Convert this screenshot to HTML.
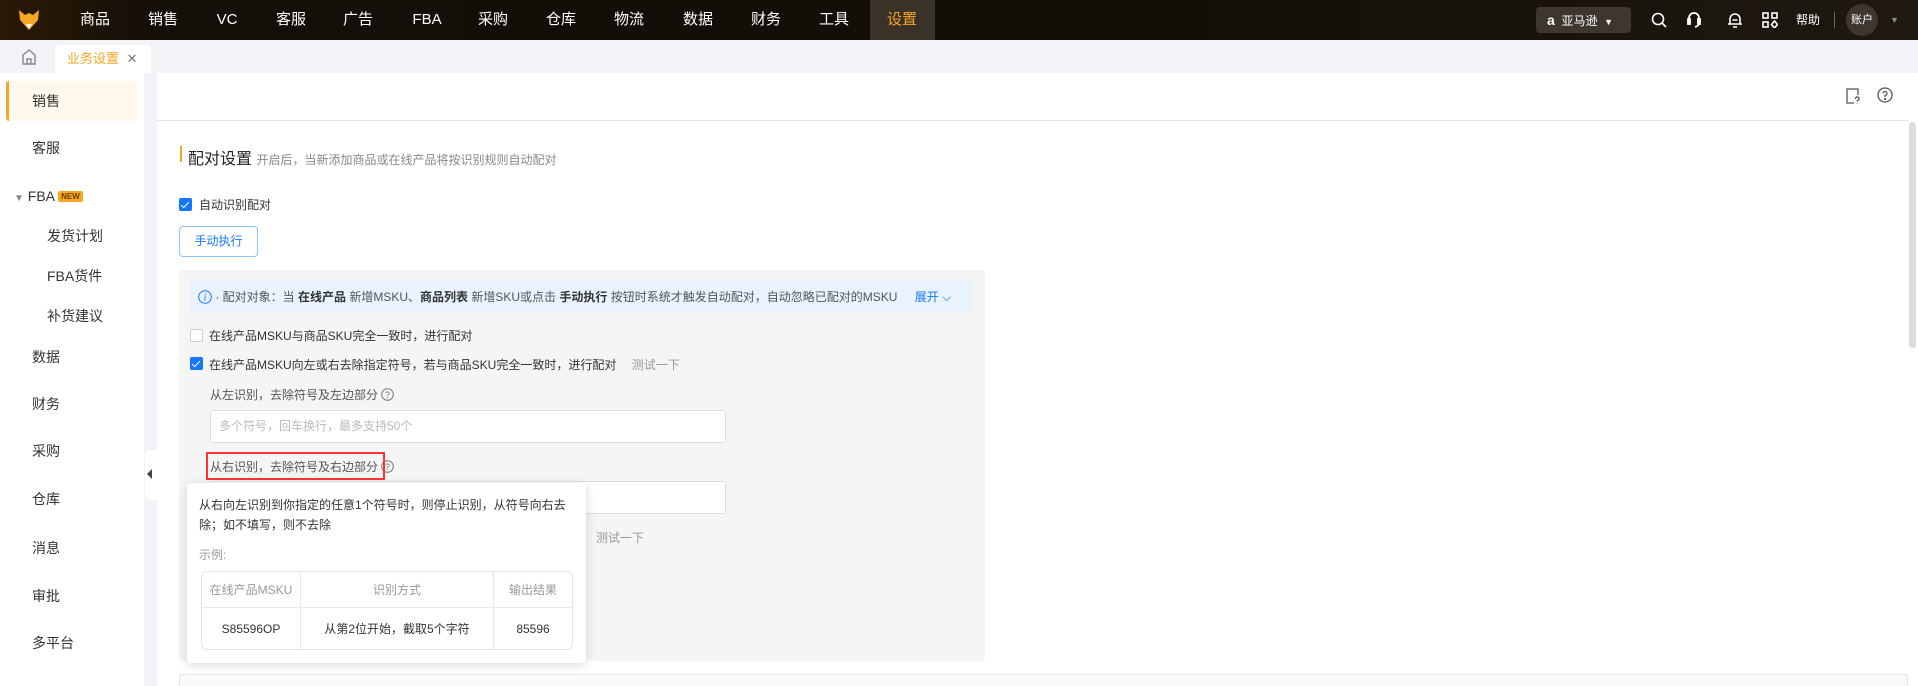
<!DOCTYPE html>
<html><head><meta charset="utf-8">
<style>
*{box-sizing:border-box;margin:0;padding:0}
body{width:1918px;height:686px;overflow:hidden;font-family:"Liberation Sans","Noto Sans CJK SC",sans-serif;background:#fff;position:relative;color:#333}
.a{position:absolute}
#nav{left:0;top:0;width:1918px;height:40px;background:linear-gradient(90deg,#2a1a06 0%,#140f08 8%,#120e08 60%,#1e1910 100%)}
.ni{position:absolute;top:0;height:40px;line-height:40px;color:#fff;font-size:15px;transform:translateX(-50%)}
#tabs{left:0;top:40px;width:1918px;height:33px;background:#f2f3f6}
.side{left:0;top:73px;width:144px;height:613px;background:#fff}
.si{position:absolute;left:32px;font-size:14px;color:#333;transform:translateY(-50%)}
.sub{left:47px}
.gap{left:144px;top:73px;width:13px;height:613px;background:#f2f3f6}
.cb{position:absolute;width:13px;height:13px;border-radius:2px}
.on{background:#1677ff}
.on:after{content:"";position:absolute;left:4px;top:1.5px;width:3px;height:7px;border:solid #fff;border-width:0 1.5px 1.5px 0;transform:rotate(45deg)}
.off{border:1px solid #ccc;background:#fff}
.inp{position:absolute;background:#fff;border:1px solid #ddd;border-radius:3px}
td{border-right:1px solid #e8e8e8;text-align:center;font-size:12px}
.q{display:inline-block;vertical-align:-2px}
</style></head><body>
<div id="nav" class="a">
 <svg class="a" style="left:18px;top:9px" width="22" height="22" viewBox="0 0 22 22"><path d="M1 1 L7 6 L11 4 L15 6 L21 1 L20 11 L11 21 L2 11 Z" fill="#f5a623"/><path d="M8 15 L14 15 L11 20Z" fill="#fff"/></svg>
 <div class="ni" style="left:95px">商品</div><div class="ni" style="left:163px">销售</div><div class="ni" style="left:227px">VC</div><div class="ni" style="left:291px">客服</div><div class="ni" style="left:358px">广告</div><div class="ni" style="left:427px">FBA</div><div class="ni" style="left:493px">采购</div><div class="ni" style="left:561px">仓库</div><div class="ni" style="left:629px">物流</div><div class="ni" style="left:698px">数据</div><div class="ni" style="left:766px">财务</div><div class="ni" style="left:834px">工具</div>
 <div class="a" style="left:870px;top:0;width:65px;height:40px;background:#3a3226"></div>
 <div class="ni" style="left:902px;color:#f5a623">设置</div>
 <div class="a" style="left:1536px;top:7px;width:95px;height:26px;background:#3d3730;border-radius:4px;color:#fff;font-size:12px;line-height:26px;padding-left:11px"><b style="font-size:14px">a</b>&nbsp; 亚马逊 &nbsp;<span style="font-size:9px">▼</span></div>
 <svg class="a" style="left:1651px;top:12px" width="16" height="16" viewBox="0 0 16 16" fill="none" stroke="#fff" stroke-width="1.6"><circle cx="7" cy="7" r="5.5"/><path d="M11 11 L15 15"/></svg>
 <svg class="a" style="left:1686px;top:11px" width="16" height="18" viewBox="0 0 16 18" fill="none" stroke="#fff" stroke-width="1.8"><path d="M3 10 V7 A5 5 0 0 1 13 7 V12 Q13 15 9 16"/><rect x="2" y="8" width="2" height="5" fill="#fff"/><rect x="12" y="8" width="2" height="5" fill="#fff"/></svg>
 <svg class="a" style="left:1727px;top:11px" width="16" height="18" viewBox="0 0 16 18" fill="none" stroke="#fff" stroke-width="1.6"><path d="M3 13 V8 A5 5 0 0 1 13 8 V13 Z M1 13 H15 M6 16 H10 M5.5 9 H10.5"/></svg>
 <svg class="a" style="left:1762px;top:12px" width="16" height="16" viewBox="0 0 16 16" fill="none" stroke="#fff" stroke-width="1.6"><rect x="1" y="1" width="5" height="5"/><rect x="10" y="1" width="5" height="5"/><rect x="1" y="10" width="5" height="5"/><path d="M12.5 9 L15.5 12.5 L12.5 16 L9.5 12.5Z"/></svg>
 <div class="a" style="left:1796px;top:0;line-height:40px;color:#fff;font-size:12px">帮助</div>
 <div class="a" style="left:1834px;top:12px;width:1px;height:16px;background:#666"></div>
 <div class="a" style="left:1846px;top:4px;width:32px;height:32px;border-radius:50%;background:#3d3730;color:#fff;font-size:11px;line-height:32px;text-align:center">账户</div>
 <div class="a" style="left:1890px;top:0;line-height:40px;color:#888;font-size:9px">▼</div>
</div>
<div id="tabs" class="a">
 <svg class="a" style="left:22px;top:9px" width="14" height="16" viewBox="0 0 14 16" fill="none" stroke="#888" stroke-width="1.4"><path d="M1 6 L7 1 L13 6 V15 H1 Z M5 15 V10 H9 V15"/></svg>
 <div class="a" style="left:55px;top:5px;width:96px;height:28px;background:#fff;border-radius:3px 3px 0 0;font-size:13px;color:#f5a623;line-height:28px;padding-left:12px">业务设置 <span style="color:#777;margin-left:4px">✕</span></div>
</div>
<div class="a side">
 <div class="a" style="left:6px;top:8px;width:131px;height:40px;background:#fff8ec;border-radius:3px;border-left:3px solid #f5a623"></div>
 <div class="si" style="top:28px">销售</div>
 <div class="si" style="top:75px">客服</div>
 <div class="si" style="top:123px;left:14px"><span style="color:#888;font-size:10px">▼</span> FBA <span style="background:#f5a623;color:#6b3f00;font-size:8px;font-weight:bold;padding:1px 3px;border-radius:2px;vertical-align:2px">NEW</span></div>
 <div class="si sub" style="top:163px">发货计划</div>
 <div class="si sub" style="top:203px">FBA货件</div>
 <div class="si sub" style="top:243px">补货建议</div>
 <div class="si" style="top:284px">数据</div>
 <div class="si" style="top:331px">财务</div>
 <div class="si" style="top:378px">采购</div>
 <div class="si" style="top:426px">仓库</div>
 <div class="si" style="top:475px">消息</div>
 <div class="si" style="top:523px">审批</div>
 <div class="si" style="top:570px">多平台</div>
</div>
<div class="a gap"></div>
<div class="a" style="left:145px;top:450px;width:12px;height:50px;background:#fff;border-radius:6px 0 0 6px"><div style="position:absolute;left:2px;top:19px;width:0;height:0;border:5px solid transparent;border-right:5px solid #444;border-left:0"></div></div>
<div class="a" style="left:157px;top:120px;width:1751px;height:1px;background:#e4e4e4"></div>
<svg class="a" style="left:1846px;top:88px" width="14" height="16" viewBox="0 0 14 16" fill="none" stroke="#555" stroke-width="1.3"><path d="M8 15 H1 V1 H12 V7"/><path d="M9.5 11 A1.8 1.8 0 1 1 11.3 12.5 V13.5 M11.3 15 V15.5"/></svg>
<svg class="a" style="left:1877px;top:87px" width="16" height="16" viewBox="0 0 16 16" fill="none" stroke="#555" stroke-width="1.3"><circle cx="8" cy="8" r="7"/><path d="M6 6.3 A2 2 0 1 1 8 8.5 V10"/><circle cx="8" cy="12" r=".5" fill="#555"/></svg>
<div class="a" style="left:1909px;top:122px;width:7px;height:226px;background:#dcdcdc;border-radius:4px"></div>
<div class="a" style="left:180px;top:146px;width:2px;height:16px;background:#f5a623"></div>
<div class="a" style="left:188px;top:145px;font-size:16px;color:#222">配对设置 <span style="font-size:12px;color:#888">开启后，当新添加商品或在线产品将按识别规则自动配对</span></div>
<div class="cb on" style="left:179px;top:198px"></div>
<div class="a" style="left:199px;top:196px;font-size:12px">自动识别配对</div>
<div class="a" style="left:179px;top:226px;width:79px;height:31px;border:1px solid #91c3ff;border-radius:4px;color:#1677ff;font-size:12px;line-height:29px;text-align:center">手动执行</div>
<div class="a" style="left:179px;top:270px;width:806px;height:391px;background:#f5f5f5;border-radius:3px"></div>
<div class="a" style="left:190px;top:281px;width:783px;height:32px;background:#e8f3ff;font-size:12px;line-height:32px;padding-left:8px;color:#555">
 <svg class="q" width="14" height="14" viewBox="0 0 14 14" style="vertical-align:-3px"><circle cx="7" cy="7" r="6.3" fill="none" stroke="#1677ff" stroke-width="1"/><text x="7" y="10.5" font-size="10" font-style="italic" text-anchor="middle" fill="#1677ff" font-family="Liberation Serif">i</text></svg> · 配对对象：当 <b style="color:#333">在线产品</b> 新增MSKU、<b style="color:#333">商品列表</b> 新增SKU或点击 <b style="color:#333">手动执行</b> 按钮时系统才触发自动配对，自动忽略已配对的MSKU <span style="color:#1677ff;margin-left:14px">展开 ⌵</span></div>
<div class="cb off" style="left:190px;top:329px"></div>
<div class="a" style="left:209px;top:327px;font-size:12px">在线产品MSKU与商品SKU完全一致时，进行配对</div>
<div class="cb on" style="left:190px;top:357px"></div>
<div class="a" style="left:209px;top:356px;font-size:12px">在线产品MSKU向左或右去除指定符号，若与商品SKU完全一致时，进行配对 <span style="color:#999;margin-left:12px">测试一下</span></div>
<div class="a" style="left:210px;top:386px;font-size:12px;color:#555">从左识别，去除符号及左边部分 <svg class="q" width="13" height="13" viewBox="0 0 13 13"><circle cx="6.5" cy="6.5" r="5.8" fill="none" stroke="#777"/><text x="6.5" y="10" font-size="9" text-anchor="middle" fill="#777">?</text></svg></div>
<div class="inp" style="left:210px;top:410px;width:516px;height:33px;font-size:12px;color:#bbb;line-height:31px;padding-left:8px">多个符号，回车换行，最多支持50个</div>
<div class="a" style="left:210px;top:458px;font-size:12px;color:#555">从右识别，去除符号及右边部分 <svg class="q" width="13" height="13" viewBox="0 0 13 13"><circle cx="6.5" cy="6.5" r="5.8" fill="none" stroke="#777"/><text x="6.5" y="10" font-size="9" text-anchor="middle" fill="#777">?</text></svg></div>
<div class="a" style="left:206px;top:452px;width:179px;height:28px;border:2px solid #f33"></div>
<div class="inp" style="left:210px;top:481px;width:516px;height:33px"></div>
<div class="a" style="left:596px;top:529px;font-size:12px;color:#999">测试一下</div>
<div class="a" style="left:187px;top:483px;width:399px;height:180px;background:#fff;border-radius:4px;box-shadow:0 2px 10px rgba(0,0,0,.15)">
 <div class="a" style="left:12px;top:12px;width:380px;font-size:12px;line-height:20px;color:#333">从右向左识别到你指定的任意1个符号时，则停止识别，从符号向右去除；如不填写，则不去除</div>
 <div class="a" style="left:12px;top:63px;font-size:12px;color:#999">示例:</div>
 <table class="a" style="left:14px;top:88px;width:372px;height:79px;border:1px solid #e4e4e4;border-radius:6px;border-collapse:separate;border-spacing:0">
  <tr style="height:36px;color:#999"><td style="width:99px;border-bottom:1px solid #e8e8e8">在线产品MSKU</td><td style="width:193px;border-bottom:1px solid #e8e8e8">识别方式</td><td style="border-right:0;border-bottom:1px solid #e8e8e8">输出结果</td></tr>
  <tr style="color:#333"><td>S85596OP</td><td>从第2位开始，截取5个字符</td><td style="border-right:0">85596</td></tr>
 </table>
</div>
<div class="a" style="left:179px;top:674px;width:1729px;height:12px;border:1px solid #e4e4e4;border-bottom:0;background:#fafafa"></div>
</body></html>
